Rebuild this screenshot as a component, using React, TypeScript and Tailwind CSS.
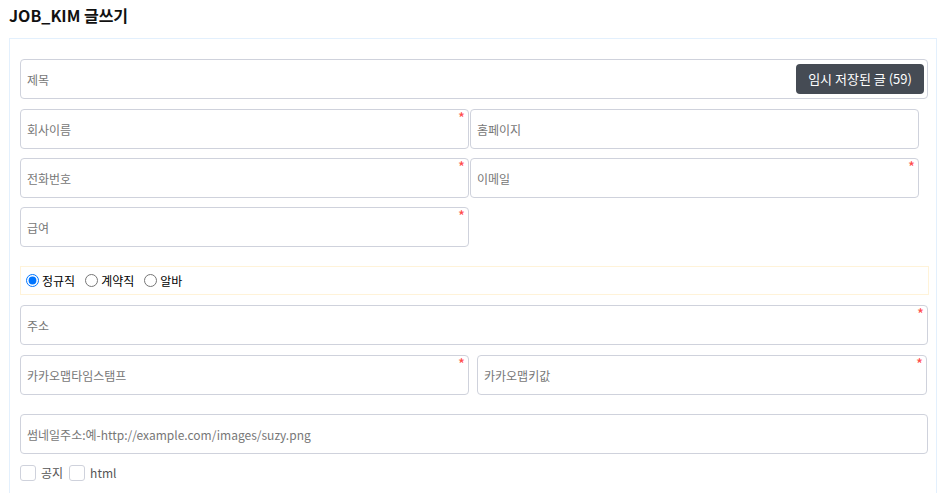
import React from "react";

const font = { fontFamily: '"Noto Sans CJK KR", "Noto Sans", sans-serif' };

function Field({
  placeholder,
  required,
  className,
  children,
}: {
  placeholder: string;
  required?: boolean;
  className?: string;
  children?: React.ReactNode;
}) {
  return (
    <div className={"relative h-[40px] " + (className ?? "")}>
      <input
        placeholder={placeholder}
        className="w-full h-full border border-[#cfd2dc] rounded-[4px] pl-[6px] text-[12px] text-[#333] placeholder:text-[#777] outline-none bg-white"
        style={font}
      />
      {required && (
        <span className="absolute right-[4px] top-[1px] text-[#ff4b4b] text-[15px] leading-none">
          *
        </span>
      )}
      {children}
    </div>
  );
}

export default function App() {
  return (
    <div className="w-[939px] h-[493px] overflow-hidden bg-white" style={font}>
      <div className="h-[38px] pl-[9px] pt-[3px] text-[16px] font-bold text-[#111]">
        JOB_KIM 글쓰기
      </div>
      <div className="ml-[9px] w-[928px] h-[460px] border border-[#e3f0fd] border-b-0 pl-[10px] pr-[8px] pt-[20px]">
        <Field placeholder="제목" className="w-[908px]">
          <button className="absolute right-[4px] top-[5px] h-[30px] w-[128px] rounded-[4px] bg-[#454b54] text-white text-[13px]">
            임시 저장된 글 (59)
          </button>
        </Field>
        <div className="flex gap-[1px] mt-[10px]">
          <Field placeholder="회사이름" required className="w-[449px]" />
          <Field placeholder="홈페이지" className="w-[449px]" />
        </div>
        <div className="flex gap-[1px] mt-[9px]">
          <Field placeholder="전화번호" required className="w-[449px]" />
          <Field placeholder="이메일" required className="w-[449px]" />
        </div>
        <div className="flex mt-[9px]">
          <Field placeholder="급여" required className="w-[449px]" />
        </div>
        <div className="mt-[19px] w-[909px] h-[29px] border border-[#fff3d9] flex items-center text-[12px] text-black">
          <label className="flex items-center">
            <input type="radio" name="t" defaultChecked className="ml-[5px] mr-[3px] w-[13px] h-[13px]" />
            정규직
          </label>
          <label className="flex items-center ml-[5px]">
            <input type="radio" name="t" className="ml-[5px] mr-[3px] w-[13px] h-[13px]" />
            계약직
          </label>
          <label className="flex items-center ml-[5px]">
            <input type="radio" name="t" className="ml-[5px] mr-[3px] w-[13px] h-[13px]" />
            알바
          </label>
        </div>
        <Field placeholder="주소" required className="w-[908px] mt-[10px]" />
        <div className="flex gap-[8px] mt-[10px]">
          <Field placeholder="카카오맵타임스탬프" required className="w-[449px]" />
          <Field placeholder="카카오맵키값" required className="w-[450px]" />
        </div>
        <Field
          placeholder="썸네일주소:예-http://example.com/images/suzy.png"
          className="w-[908px] mt-[19px]"
        />
        <div className="flex items-center mt-[10px] text-[12px] text-[#555]">
          <span className="w-[16px] h-[16px] border border-[#cfd2dc] rounded-[3px] bg-white" />
          <span className="ml-[5px]">공지</span>
          <span className="ml-[6px] w-[16px] h-[16px] border border-[#cfd2dc] rounded-[3px] bg-white" />
          <span className="ml-[5px]">html</span>
        </div>
      </div>
    </div>
  );
}
